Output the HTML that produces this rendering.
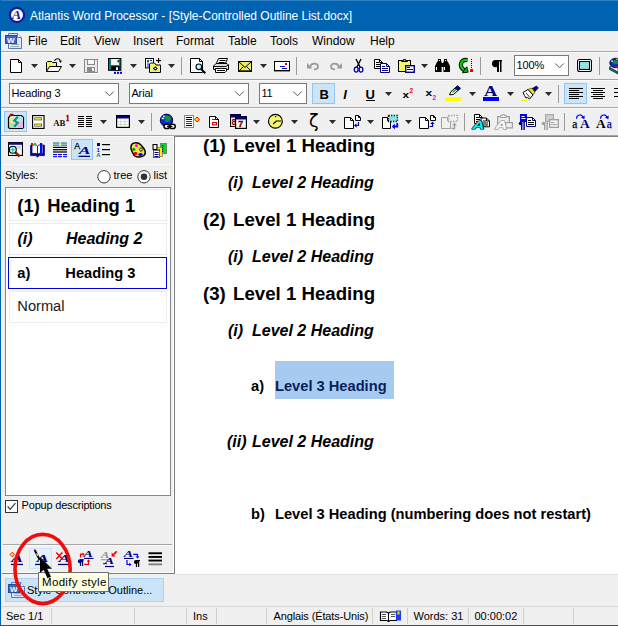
<!DOCTYPE html><html><head><meta charset="utf-8"><title>Atlantis Word Processor</title><style>
html,body{margin:0;padding:0;}
body{width:618px;height:626px;overflow:hidden;background:#f0f0f0;position:relative;font-family:"Liberation Sans",sans-serif;font-size:11px;color:#000;}
.a{position:absolute;}
.t{position:absolute;white-space:nowrap;line-height:1;}
.combo{position:absolute;background:#fff;border:1px solid #7a7a7a;box-sizing:border-box;}
.sel{position:absolute;background:#cce4f7;border:1px solid #92c6f0;box-sizing:border-box;}
svg{position:absolute;overflow:visible;}
</style></head><body>
<div class="a" style="left:0px;top:0px;width:618px;height:31px;background:#0063b1;"></div>
<div class="a" style="left:0px;top:0px;width:618px;height:1px;background:#2f7fc0;"></div>
<div class="t" style="left:30px;top:10.03px;font-size:12px;color:#fff;letter-spacing:-0.02px;">Atlantis Word Processor - [Style-Controlled Outline List.docx]</div>
<svg style="left:8px;top:6px" width="18" height="18" viewBox="0 0 18 18"><circle cx="9" cy="9" r="7.1" fill="#fff" stroke="#1818a4" stroke-width="2.2"/><text x="4.4" y="13.3" font-family="Liberation Serif,serif" font-size="13" font-weight="bold" font-style="italic" fill="#1c1ca8" transform="translate(-1.2,0) scale(1.1,1)">A</text></svg>
<div class="t" style="left:28px;top:35.03px;font-size:12px;">File</div>
<div class="t" style="left:60px;top:35.03px;font-size:12px;">Edit</div>
<div class="t" style="left:94px;top:35.03px;font-size:12px;">View</div>
<div class="t" style="left:133px;top:35.03px;font-size:12px;">Insert</div>
<div class="t" style="left:176px;top:35.03px;font-size:12px;">Format</div>
<div class="t" style="left:228px;top:35.03px;font-size:12px;">Table</div>
<div class="t" style="left:270px;top:35.03px;font-size:12px;">Tools</div>
<div class="t" style="left:312px;top:35.03px;font-size:12px;">Window</div>
<div class="t" style="left:370px;top:35.03px;font-size:12px;">Help</div>
<svg style="left:4px;top:32px" width="20" height="18" viewBox="0 0 20 18"><path d="M4.5 1.5 H13.5 L17.5 5.5 V16.5 H4.5 Z" fill="#dbe6f8" stroke="#5878b8"/><path d="M13.5 1.5 V5.5 H17.5" fill="#fff" stroke="#5878b8"/><rect x="7" y="12" width="8" height="1" fill="#9ab"/><rect x="7" y="14" width="8" height="1" fill="#9ab"/><rect x="1.5" y="3.5" width="11" height="8" fill="#3668c8" stroke="#2a4a9c"/><text x="3" y="10.5" font-size="8" font-weight="bold" fill="#fff" font-family="Liberation Sans,sans-serif">W</text></svg>
<div class="a" style="left:1px;top:51px;width:617px;height:1px;background:#a6a6a6;"></div>
<div class="a" style="left:1px;top:52px;width:617px;height:1px;background:#fbfbfb;"></div>
<div class="a" style="left:1px;top:79px;width:617px;height:1px;background:#a6a6a6;"></div>
<div class="a" style="left:1px;top:80px;width:617px;height:1px;background:#fbfbfb;"></div>
<div class="a" style="left:1px;top:107px;width:617px;height:1px;background:#a6a6a6;"></div>
<div class="a" style="left:1px;top:108px;width:617px;height:1px;background:#fbfbfb;"></div>
<div class="a" style="left:1px;top:135px;width:617px;height:1px;background:#a6a6a6;"></div>
<div class="a" style="left:1px;top:136px;width:617px;height:1px;background:#fbfbfb;"></div>
<div class="sel" style="left:312px;top:83px;width:23px;height:21px;"></div>
<div class="sel" style="left:564px;top:83px;width:23px;height:21px;"></div>
<div class="sel" style="left:4px;top:111px;width:23px;height:21px;"></div>
<div class="sel" style="left:71px;top:139px;width:22px;height:21px;"></div>
<div class="sel" style="left:29px;top:548px;width:23px;height:21px;background:#e5f1fb;border-color:#cce4f7;"></div>
<div class="combo" style="left:9px;top:83px;width:110px;height:21px;"></div>
<div class="t" style="left:11.4px;top:88.16px;font-size:11px;letter-spacing:-0.12px;">Heading 3</div>
<svg style="left:105.0px;top:91.3px" width="9" height="6" viewBox="0 0 9 6"><path d="M0.3 0.5 L4.5 4.8 L8.7 0.5" fill="none" stroke="#585858" stroke-width="1"/></svg>
<div class="combo" style="left:129px;top:83px;width:120px;height:21px;"></div>
<div class="t" style="left:131.4px;top:88.16px;font-size:11px;letter-spacing:-0.12px;">Arial</div>
<svg style="left:235.0px;top:91.3px" width="9" height="6" viewBox="0 0 9 6"><path d="M0.3 0.5 L4.5 4.8 L8.7 0.5" fill="none" stroke="#585858" stroke-width="1"/></svg>
<div class="combo" style="left:259px;top:83px;width:48px;height:21px;"></div>
<div class="t" style="left:261.4px;top:88.16px;font-size:11px;letter-spacing:-0.12px;">11</div>
<svg style="left:293.0px;top:91.3px" width="9" height="6" viewBox="0 0 9 6"><path d="M0.3 0.5 L4.5 4.8 L8.7 0.5" fill="none" stroke="#585858" stroke-width="1"/></svg>
<div class="combo" style="left:514px;top:55px;width:55px;height:21px;"></div>
<div class="t" style="left:516.4px;top:60.16px;font-size:11px;letter-spacing:-0.12px;">100%</div>
<svg style="left:555.0px;top:63.3px" width="9" height="6" viewBox="0 0 9 6"><path d="M0.3 0.5 L4.5 4.8 L8.7 0.5" fill="none" stroke="#585858" stroke-width="1"/></svg>
<div class="t" style="left:319.6px;top:87.7px;font-size:13px;font-weight:bold;">B</div>
<div class="t" style="left:343.2px;top:87.7px;font-size:13px;font-weight:bold;font-style:italic;">I</div>
<div class="t" style="left:365.4px;top:87.7px;font-size:13px;font-weight:bold;">U</div>
<div class="a" style="left:366px;top:100px;width:9px;height:1px;background:#000;"></div>
<div class="a" style="left:175px;top:137px;width:443px;height:436.6px;background:#fff;"></div>
<div class="a" style="left:174px;top:135.6px;width:444px;height:1.5px;background:#808080;"></div>
<div class="a" style="left:173.5px;top:136px;width:1.5px;height:438px;background:#808080;"></div>
<div class="a" style="left:172.5px;top:137px;width:1px;height:435px;background:#fcfcfc;"></div>
<div class="a" style="left:175px;top:573.6px;width:443px;height:1px;background:#e4e4e4;"></div>
<div class="a" style="left:2px;top:571.6px;width:171px;height:1px;background:#fcfcfc;"></div>
<div class="a" style="left:2px;top:572.7px;width:173px;height:1.3px;background:#808080;"></div>
<div class="t" style="left:203px;top:137.49px;font-size:18.67px;color:#000;font-weight:bold;">(1)</div>
<div class="t" style="left:233px;top:137.49px;font-size:18.67px;color:#000;font-weight:bold;">Level 1 Heading</div>
<div class="t" style="left:203px;top:211.49px;font-size:18.67px;color:#000;font-weight:bold;">(2)</div>
<div class="t" style="left:233px;top:211.49px;font-size:18.67px;color:#000;font-weight:bold;">Level 1 Heading</div>
<div class="t" style="left:203px;top:285.49px;font-size:18.67px;color:#000;font-weight:bold;">(3)</div>
<div class="t" style="left:233px;top:285.49px;font-size:18.67px;color:#000;font-weight:bold;">Level 1 Heading</div>
<div class="t" style="left:228px;top:174.71px;font-size:16px;color:#000;font-weight:bold;font-style:italic;">(i)</div>
<div class="t" style="left:252px;top:174.71px;font-size:16px;color:#000;font-weight:bold;font-style:italic;">Level 2 Heading</div>
<div class="t" style="left:228px;top:248.71px;font-size:16px;color:#000;font-weight:bold;font-style:italic;">(i)</div>
<div class="t" style="left:252px;top:248.71px;font-size:16px;color:#000;font-weight:bold;font-style:italic;">Level 2 Heading</div>
<div class="t" style="left:228px;top:322.71px;font-size:16px;color:#000;font-weight:bold;font-style:italic;">(i)</div>
<div class="t" style="left:252px;top:322.71px;font-size:16px;color:#000;font-weight:bold;font-style:italic;">Level 2 Heading</div>
<div class="a" style="left:275px;top:361px;width:119px;height:38px;background:#a6caf0;"></div>
<div class="t" style="left:251px;top:378.82px;font-size:14.67px;color:#000;font-weight:bold;">a)</div>
<div class="t" style="left:275px;top:378.82px;font-size:14.67px;color:#0a1f5c;font-weight:bold;">Level 3 Heading</div>
<div class="t" style="left:227px;top:433.71px;font-size:16px;color:#000;font-weight:bold;font-style:italic;">(ii)</div>
<div class="t" style="left:252px;top:433.71px;font-size:16px;color:#000;font-weight:bold;font-style:italic;">Level 2 Heading</div>
<div class="t" style="left:251px;top:506.82px;font-size:14.67px;color:#000;font-weight:bold;">b)</div>
<div class="t" style="left:275px;top:506.82px;font-size:14.67px;font-weight:bold;">Level 3 Heading (numbering does not restart)</div>
<div class="a" style="left:2px;top:164px;width:170px;height:1px;background:#fcfcfc;"></div>
<div class="t" style="left:5px;top:169.86px;font-size:11px;">Styles:</div>
<div class="t" style="left:113.5px;top:169.86px;font-size:11px;">tree</div>
<div class="t" style="left:153.5px;top:169.86px;font-size:11px;">list</div>
<svg style="left:97px;top:170px" width="14" height="14"><circle cx="7" cy="6.8" r="6.2" fill="#fff" stroke="#333" stroke-width="1"/></svg>
<svg style="left:137px;top:170px" width="14" height="14"><circle cx="7" cy="6.8" r="6.2" fill="#fff" stroke="#333" stroke-width="1"/><circle cx="7" cy="6.8" r="3.3" fill="#333"/></svg>
<div class="a" style="left:5px;top:187px;width:166px;height:309px;background:#fff;border:1px solid #828790;box-sizing:border-box;"></div>
<div class="a" style="left:9px;top:189px;width:158px;height:32px;border:1px solid #ececec;box-sizing:border-box;"></div>
<div class="a" style="left:9px;top:223px;width:158px;height:32px;border:1px solid #ececec;box-sizing:border-box;"></div>
<div class="a" style="left:9px;top:291px;width:158px;height:32px;border:1px solid #ececec;box-sizing:border-box;"></div>
<div class="a" style="left:8px;top:257px;width:159px;height:32px;border:1px solid #0000e0;box-sizing:border-box;"></div>
<div class="t" style="left:17.3px;top:196.92px;font-size:18.4px;color:#000;font-weight:bold;">(1)</div>
<div class="t" style="left:47.3px;top:196.92px;font-size:18.4px;color:#000;font-weight:bold;">Heading 1</div>
<div class="t" style="left:17.5px;top:230.71px;font-size:16px;color:#000;font-weight:bold;font-style:italic;">(i)</div>
<div class="t" style="left:66px;top:230.71px;font-size:16px;color:#000;font-weight:bold;font-style:italic;">Heading 2</div>
<div class="t" style="left:17.3px;top:266.12px;font-size:14.67px;color:#000;font-weight:bold;">a)</div>
<div class="t" style="left:65.3px;top:266.12px;font-size:14.67px;color:#000;font-weight:bold;">Heading 3</div>
<div class="t" style="left:17.3px;top:299.02px;font-size:14.67px;color:#1a1a1a;">Normal</div>
<div class="a" style="left:5px;top:500px;width:13px;height:13px;background:#fff;border:1px solid #333;box-sizing:border-box;"></div>
<svg style="left:5px;top:500px" width="13" height="13"><path d="M2.6 6.4 L5.2 9.3 L10.4 3.2" fill="none" stroke="#333" stroke-width="1.2"/></svg>
<div class="t" style="left:21.6px;top:500.06px;font-size:11px;letter-spacing:-0.2px;">Popup descriptions</div>
<div class="a" style="left:3px;top:544px;width:169px;height:1px;background:#a6a6a6;"></div>
<div class="a" style="left:3px;top:545px;width:169px;height:1px;background:#fbfbfb;"></div>
<div class="a" style="left:5px;top:578px;width:159px;height:24px;background:#cce4f7;border:1px solid #a9d4f5;box-sizing:border-box;"></div>
<svg style="left:7px;top:581px" width="20" height="18" viewBox="0 0 20 18"><path d="M4.5 1.5 H13.5 L17.5 5.5 V16.5 H4.5 Z" fill="#dbe6f8" stroke="#5878b8"/><path d="M13.5 1.5 V5.5 H17.5" fill="#fff" stroke="#5878b8"/><rect x="7" y="12" width="8" height="1" fill="#9ab"/><rect x="7" y="14" width="8" height="1" fill="#9ab"/><rect x="1.5" y="3.5" width="11" height="8" fill="#3668c8" stroke="#2a4a9c"/><text x="3" y="10.5" font-size="8" font-weight="bold" fill="#fff" font-family="Liberation Sans,sans-serif">W</text></svg>
<div class="t" style="left:27px;top:584.86px;font-size:11px;">Style-Controlled Outline...</div>
<div class="a" style="left:1px;top:605.5px;width:617px;height:1px;background:#d4d4d4;"></div>
<div class="a" style="left:0px;top:624.7px;width:618px;height:1.3px;background:#0063b1;"></div>
<div class="a" style="left:50.5px;top:608px;width:1px;height:16px;background:#cfcfcf;"></div>
<div class="a" style="left:134px;top:608px;width:1px;height:16px;background:#cfcfcf;"></div>
<div class="a" style="left:186px;top:608px;width:1px;height:16px;background:#cfcfcf;"></div>
<div class="a" style="left:216px;top:608px;width:1px;height:16px;background:#cfcfcf;"></div>
<div class="a" style="left:266px;top:608px;width:1px;height:16px;background:#cfcfcf;"></div>
<div class="a" style="left:372px;top:608px;width:1px;height:16px;background:#cfcfcf;"></div>
<div class="a" style="left:407px;top:608px;width:1px;height:16px;background:#cfcfcf;"></div>
<div class="a" style="left:467.5px;top:608px;width:1px;height:16px;background:#cfcfcf;"></div>
<div class="a" style="left:522.5px;top:608px;width:1px;height:16px;background:#cfcfcf;"></div>
<div class="a" style="left:572.5px;top:608px;width:1px;height:16px;background:#cfcfcf;"></div>
<div class="t" style="left:6px;top:610.86px;font-size:11px;">Sec 1/1</div>
<div class="t" style="left:193px;top:610.86px;font-size:11px;">Ins</div>
<div class="t" style="left:273.5px;top:610.86px;font-size:11px;letter-spacing:-0.12px;">Anglais (États-Unis)</div>
<div class="t" style="left:413.5px;top:610.86px;font-size:11px;">Words: 31</div>
<div class="t" style="left:474.5px;top:610.86px;font-size:11px;">00:00:02</div>
<svg style="left:379px;top:609px" width="24" height="14" viewBox="0 0 24 14"><path d="M1.5 3 V11.5 H8 L9.5 12.5 L11 11.5 H17.5 V3 H11.5 L9.5 4 L7.5 3 Z" fill="#fff" stroke="#000" stroke-width="1.2"/><line x1="9.5" y1="4" x2="9.5" y2="12" stroke="#000"/><rect x="3" y="5" width="4" height="1" fill="#555"/><rect x="3" y="7" width="4" height="1" fill="#555"/><rect x="3" y="9" width="4" height="1" fill="#555"/><rect x="12" y="5" width="4" height="1" fill="#555"/><rect x="12" y="7" width="4" height="1" fill="#555"/><rect x="17" y="1.5" width="5" height="10" fill="#1a3cff"/><rect x="18.5" y="2.5" width="2" height="3" fill="#ffe000"/></svg>
<div class="a" style="left:0px;top:0px;width:1.1px;height:626px;background:#0063b1;"></div>
<svg class="ic" style="left:0;top:0" width="618" height="626" viewBox="0 0 618 626" font-family="Liberation Sans,sans-serif"><path d="M10.5 59.5 H18.5 L21.5 62.5 V72.5 H10.5 Z" fill="#fff" stroke="#000" stroke-width="1" />
<path d="M18.5 59.5 V62.5 H21.5" fill="none" stroke="#000" stroke-width="1" />
<path d="M31 64 H38 L34.5 68 Z" fill="#2b2b2b" stroke="none" stroke-width="1" />
<path d="M46.5 71.5 V62.5 L47.5 61.5 H51.5 L52.5 62.5 H56.5 V66" fill="#f4f46a" stroke="#000" stroke-width="1" />
<path d="M46.5 71.5 L49.5 66.5 H61.5 L58.5 71.5 Z" fill="#fffff4" stroke="#000" stroke-width="1" />
<path d="M54.5 60.8 C55.3 58.2 59.3 58 60.3 60.4" fill="none" stroke="#000" stroke-width="1.1" />
<path d="M58.6 60.4 L61.9 60.4 L60.6 63 Z" fill="#000" stroke="none" stroke-width="1" />
<path d="M69 64 H76 L72.5 68 Z" fill="#2b2b2b" stroke="none" stroke-width="1" />
<rect x="85.5" y="60.5" width="13" height="13" fill="none" stroke="#fff" stroke-width="1" />
<rect x="84.5" y="59.5" width="13" height="13" fill="#ececec" stroke="#8a8a8a" stroke-width="1" />
<rect x="87.5" y="59.5" width="7" height="5" fill="#f6f6f6" stroke="#8a8a8a" stroke-width="1" />
<rect x="87" y="67" width="8" height="5" fill="#8a8a8a" />
<rect x="92" y="68" width="2" height="3" fill="#f0f0f0" />
<rect x="108.5" y="58.5" width="12.4" height="11.8" fill="#008080" stroke="#000" stroke-width="1" />
<rect x="111" y="59" width="8" height="6" fill="#f4f4f4" />
<rect x="117.6" y="60" width="1.2" height="2.4" fill="#000" />
<rect x="111" y="66.2" width="8.6" height="4" fill="#000" />
<rect x="116" y="67.3" width="2" height="2.7" fill="#fff" />
<rect x="114" y="71.8" width="2" height="2.1" fill="#0000ff" />
<rect x="117" y="71.8" width="2" height="2.1" fill="#0000ff" />
<rect x="120" y="71.8" width="2" height="2.1" fill="#0000ff" />
<path d="M130 64 H137 L133.5 68 Z" fill="#2b2b2b" stroke="none" stroke-width="1" />
<rect x="145.5" y="58.5" width="8" height="9.4" fill="#fff" stroke="#000" stroke-width="1" />
<rect x="147" y="60" width="2" height="2.4" fill="#008000" />
<rect x="150" y="60" width="2" height="1" fill="#0000ff" />
<rect x="147" y="63.6" width="2" height="1" fill="#0000ff" />
<rect x="147" y="65.6" width="2" height="1" fill="#0000ff" />
<path d="M149.5 72.5 V64 L150.5 63 H154.5 L156 65 H160.5 V72.5 Z" fill="#f4f46a" stroke="#000" stroke-width="1" />
<path d="M153 68.5 H157.6 M155.3 66.2 V70.8 M153.7 66.9 L156.9 70.1 M156.9 66.9 L153.7 70.1" fill="none" stroke="#000080" stroke-width="0.9" />
<rect x="154.8" y="68" width="1" height="1" fill="#fff" />
<rect x="156" y="60" width="5" height="1.1" fill="#000" />
<rect x="158" y="58" width="1.1" height="5" fill="#000" />
<path d="M168 64 H175 L171.5 68 Z" fill="#2b2b2b" stroke="none" stroke-width="1" />
<rect x="181" y="57" width="1" height="18" fill="#9a9a9a" />
<path d="M190.5 58.5 H199.5 L202.5 61.5 V72.5 H190.5 Z" fill="#fff" stroke="#000" stroke-width="1" />
<path d="M199.5 58.5 V61.5 H202.5" fill="none" stroke="#000" stroke-width="1" />
<circle cx="198.8" cy="66.8" r="2.8" fill="#aff" stroke="#000" stroke-width="1.1"/>
<line x1="201" y1="69" x2="205.3" y2="73.3" stroke="#000" stroke-width="2" />
<path d="M218.5 58.5 H227.5 L225 64.5 H216 Z" fill="#fff" stroke="#000" stroke-width="1" />
<line x1="219.5" y1="60.5" x2="225.5" y2="60.5" stroke="#000" stroke-width="1" />
<line x1="218.7" y1="62.5" x2="224.7" y2="62.5" stroke="#000" stroke-width="1" />
<path d="M213.5 69.5 V66 L216 63.5 H227 L228.5 65 V69.5 Z" fill="#dcdcdc" stroke="#000" stroke-width="1" />
<path d="M213.5 66.5 H226 L228.5 64.8" fill="none" stroke="#000" stroke-width="0.9" />
<path d="M215.5 68.5 H226.5 V71 L225 72.5 H215.5 Z" fill="#fff" stroke="#000" stroke-width="1" />
<rect x="217" y="70" width="8" height="1" fill="#000" />
<rect x="219.5" y="67" width="3" height="1.2" fill="#f0e000" />
<rect x="238.5" y="61.5" width="13" height="9.6" fill="#ecec58" stroke="#000" stroke-width="1" />
<rect x="238" y="70.6" width="14" height="1.2" fill="#000" />
<path d="M238.5 61.5 L245 67.5 L251.5 61.5 M238.5 71.5 L243.5 66.5 M251.5 71.5 L246.5 66.5" fill="none" stroke="#000" stroke-width="1" />
<path d="M260 64 H267 L263.5 68 Z" fill="#2b2b2b" stroke="none" stroke-width="1" />
<rect x="274.5" y="61.5" width="15" height="9" fill="#fff" stroke="#000" stroke-width="1" />
<rect x="274" y="70" width="16" height="1.4" fill="#000" />
<rect x="280" y="66" width="5" height="1" fill="#0000ff" />
<rect x="282" y="68" width="5" height="1" fill="#000080" />
<rect x="285" y="63" width="2" height="2" fill="#c00020" />
<rect x="296" y="57" width="1" height="18" fill="#9a9a9a" />
<path d="M310 67 C311 62.5 318 62.5 318 66.5 C318 68.5 316.5 69.3 314 69.3" fill="none" stroke="#9a9a9a" stroke-width="1.8" />
<path d="M307 63 V68.5 H312.5 Z" fill="#9a9a9a" stroke="none" stroke-width="1" />
<path d="M339 67 C338 62.5 331 62.5 331 66.5 C331 68.5 332.5 69.3 335 69.3" fill="none" stroke="#9a9a9a" stroke-width="1.8" />
<path d="M342 63 V68.5 H336.5 Z" fill="#9a9a9a" stroke="none" stroke-width="1" />
<path d="M356 59 L360.3 67.5 M361 59 L356.7 67.5" fill="none" stroke="#000" stroke-width="1.35" />
<ellipse cx="356.2" cy="69.6" rx="1.9" ry="2.5" fill="none" stroke="#0000a0" stroke-width="1.3" />
<ellipse cx="361" cy="69.6" rx="1.9" ry="2.5" fill="none" stroke="#0000a0" stroke-width="1.3" />
<path d="M374.5 59.5 H379.5 L382.5 62.5 V68.5 H374.5 Z" fill="#fff" stroke="#000" stroke-width="1" />
<path d="M379.5 59.5 V62.5 H382.5" fill="none" stroke="#000" stroke-width="1" />
<rect x="376" y="62" width="3" height="1" fill="#000" />
<rect x="376" y="64" width="4" height="1" fill="#000" />
<rect x="376" y="66" width="4" height="1" fill="#000" />
<path d="M380.5 63.5 H386.5 L389.5 66.5 V72.5 H380.5 Z" fill="#fff" stroke="#000080" stroke-width="1" />
<path d="M386.5 63.5 V66.5 H389.5" fill="none" stroke="#000080" stroke-width="1" />
<rect x="382" y="66" width="3" height="1" fill="#000080" />
<rect x="382" y="68" width="6" height="1" fill="#000080" />
<rect x="382" y="70" width="6" height="1" fill="#000080" />
<rect x="398.5" y="60.5" width="12" height="11" fill="#f4f46a" stroke="#000" stroke-width="1" />
<path d="M401.5 61.5 V60.5 H403.5 V59.5 H405.5 V60.5 H407.5 V61.5 Z" fill="#e0e0e0" stroke="#000" stroke-width="1" />
<rect x="405.7" y="65.7" width="8.6" height="6.6" fill="#fff" stroke="#000080" stroke-width="1.4" />
<rect x="407" y="67" width="3" height="1" fill="#000080" />
<rect x="407" y="69" width="6" height="1" fill="#000080" />
<path d="M421 64 H428 L424.5 68 Z" fill="#2b2b2b" stroke="none" stroke-width="1" />
<path d="M438 59 H441 V61 L441.6 62 V72 H435 V66 L437 62 L438 61 Z" fill="#000" stroke="none" stroke-width="1" />
<path d="M447 59 H444 V61 L443.4 62 V72 H450 V66 L448 62 L447 61 Z" fill="#000" stroke="none" stroke-width="1" />
<rect x="441" y="63" width="3" height="4" fill="#000" />
<rect x="436" y="67" width="1" height="3" fill="#fff" />
<rect x="444" y="67" width="1" height="3" fill="#fff" />
<rect x="439" y="60" width="1" height="1" fill="#fff" />
<rect x="445" y="60" width="1" height="1" fill="#fff" />
<path d="M467.5 60 C461 59 458 66 464.5 70.5" fill="none" stroke="#000" stroke-width="4.2" />
<path d="M467.5 60 C461 59 458 66 464.5 70.5" fill="none" stroke="#00d000" stroke-width="2.4" />
<path d="M462.5 72.8 L468.2 72.2 L466.8 66.8 Z" fill="#00c000" stroke="#000" stroke-width="0.9" />
<rect x="471" y="59" width="1" height="1" fill="#000" />
<rect x="471" y="61" width="1" height="1" fill="#000" />
<rect x="471" y="63" width="1" height="1" fill="#000" />
<rect x="471" y="65" width="1" height="1" fill="#000" />
<rect x="471" y="67" width="1" height="1" fill="#000" />
<rect x="470" y="69" width="3" height="3" fill="#f00000" />
<rect x="480" y="57" width="1" height="18" fill="#9a9a9a" />
<ellipse cx="495.6" cy="63.6" rx="3.6" ry="3.6" fill="#000" stroke="none" stroke-width="1" />
<rect x="495" y="60" width="7" height="1.5" fill="#000" />
<rect x="497" y="60" width="2" height="12" fill="#000" />
<rect x="500" y="60" width="1.5" height="12" fill="#000" />
<rect x="577.55" y="59.55" width="13.9" height="11.9" fill="#fff" stroke="#000" stroke-width="1.1" rx="2"/>
<rect x="579.55" y="61.55" width="9.9" height="7.9" fill="#a4ffff" stroke="#000" stroke-width="1.1" />
<rect x="581" y="63.5" width="7" height="0.8" fill="#9aa" />
<rect x="581" y="65.5" width="7" height="0.8" fill="#9aa" />
<rect x="581" y="67.5" width="7" height="0.8" fill="#9aa" />
<rect x="599" y="57" width="1" height="18" fill="#9a9a9a" />
<path d="M609.5 67.5 L618 72.5 V74 L609.5 69.5 Z" fill="#008080" stroke="#003838" stroke-width="0.8" />
<path d="M609.5 67 L614 64.5 L618 66.5 V72 Z" fill="#fff" stroke="#003838" stroke-width="0.8" />
<ellipse cx="616" cy="63" rx="6.2" ry="4.8" fill="#0828d8" stroke="#000820" stroke-width="0.9" />
<path d="M612 62 C613.5 59.5 617 60 618 61 V63.5 C615.5 64.8 613.5 64.5 612 62Z" fill="#109030" stroke="none" stroke-width="1" />
<rect x="611" y="60.5" width="2" height="1.2" fill="#d8f0ff" />
<rect x="616" y="58.6" width="2" height="1.2" fill="#b0b0b0" />
<rect x="615.5" y="66" width="2.5" height="1.6" fill="#f00018" />
<path d="M385 92 H392 L388.5 96 Z" fill="#2b2b2b" stroke="none" stroke-width="1" />
<text x="0" y="0" font-size="9.5" fill="#000" font-weight="bold" transform="translate(402.6,98.4) scale(1.25,1)">x</text>
<text x="409.6" y="93.4" font-size="6.5" fill="#f00000" font-weight="bold">2</text>
<text x="0" y="0" font-size="9.5" fill="#000" font-weight="bold" transform="translate(425.6,96) scale(1.25,1)">x</text>
<text x="432.4" y="100" font-size="6.5" fill="#f000f0" font-weight="bold">2</text>
<rect x="445" y="97" width="16" height="4" fill="#ffff00" />
<path d="M449.5 94.8 L451 91.5 L457.5 86 L460.3 88.3 L453.5 94.5 Z" fill="#fff" stroke="#000" stroke-width="1" />
<path d="M455 88.2 L457.5 86 L460.3 88.3 L457.8 90.6 Z" fill="#0000c0" stroke="#000" stroke-width="0.8" />
<line x1="452.5" y1="92.5" x2="456.5" y2="89" stroke="#00a000" stroke-width="1.2" />
<path d="M469 92 H476 L472.5 96 Z" fill="#2b2b2b" stroke="none" stroke-width="1" />
<text x="0" y="0" font-size="14.5" fill="#000080" font-weight="bold" font-family="Liberation Serif,serif" transform="translate(484,96.2) scale(1.27,1)">A</text>
<rect x="483" y="97" width="16" height="4" fill="#0000ff" />
<path d="M507 92 H514 L510.5 96 Z" fill="#2b2b2b" stroke="none" stroke-width="1" />
<path d="M531.5 89 L536.5 86 L538.3 88 L534 92.5 Z" fill="#000080" stroke="#000060" stroke-width="0.8" />
<path d="M528 89.5 L531.5 88 L535 92 L533 95 Z" fill="#f0e020" stroke="#404000" stroke-width="0.7" />
<path d="M523 92.5 L528 89.5 L533 95 L529.5 99 L527.5 97.5 L526 98 L524.5 95.5 Z" fill="#fff" stroke="#000" stroke-width="1" />
<line x1="526" y1="93" x2="530" y2="97.5" stroke="#000" stroke-width="0.8" />
<rect x="522" y="100" width="1.2" height="1" fill="#f0e800" />
<rect x="524" y="100" width="1.2" height="1" fill="#f0e800" />
<rect x="526" y="100" width="1.2" height="1" fill="#f0e800" />
<path d="M545 92 H552 L548.5 96 Z" fill="#2b2b2b" stroke="none" stroke-width="1" />
<rect x="558" y="85" width="1" height="18" fill="#9a9a9a" />
<rect x="569" y="88" width="14" height="1" fill="#000" />
<rect x="569" y="90" width="10" height="1" fill="#000" />
<rect x="569" y="92" width="14" height="1" fill="#000" />
<rect x="569" y="94" width="10" height="1" fill="#000" />
<rect x="569" y="96" width="14" height="1" fill="#000" />
<rect x="569" y="98" width="10" height="1" fill="#000" />
<rect x="591" y="88" width="14" height="1" fill="#000" />
<rect x="593" y="90" width="10" height="1" fill="#000" />
<rect x="591" y="92" width="14" height="1" fill="#000" />
<rect x="593" y="94" width="10" height="1" fill="#000" />
<rect x="591" y="96" width="14" height="1" fill="#000" />
<rect x="593" y="98" width="10" height="1" fill="#000" />
<rect x="614" y="88" width="6" height="1" fill="#000" />
<rect x="614" y="92" width="6" height="1" fill="#000" />
<rect x="614" y="96" width="6" height="1" fill="#000" />
<path d="M8.5 127.5 V117.5 L10.5 115.5 H21.5 L23.5 117.5 V127.5 L22.5 128.5 H9.5 Z" fill="#cfe8d6" stroke="#000" stroke-width="1.2" />
<rect x="10" y="117" width="4" height="6" fill="#e4ecA0" />
<rect x="10" y="123" width="4" height="5" fill="#a8e4a8" />
<rect x="14" y="117" width="4" height="4" fill="#e8f0b8" />
<rect x="18" y="117" width="5" height="5" fill="#a8e8e8" />
<rect x="18" y="122" width="5" height="6" fill="#ecb4ec" />
<rect x="14" y="124" width="4" height="4" fill="#b8ecc8" />
<path d="M9.5 115.5 L10.5 114 H13 L14 115.5 Z" fill="#e00000" stroke="#a00000" stroke-width="0.6" />
<path d="M17.8 116.8 L14.3 120.6 L17.7 122.8 L14.3 126.8" fill="none" stroke="#109090" stroke-width="2.3" />
<rect x="32.575" y="115.575" width="11.45" height="12.85" fill="#fff" stroke="#000" stroke-width="1.15" />
<rect x="34.699999999999996" y="117.8" width="7.0" height="2.1999999999999997" fill="#f8f020" stroke="#333" stroke-width="0.6" />
<rect x="34.699999999999996" y="124.0" width="7.0" height="2.1999999999999997" fill="#f8f020" stroke="#333" stroke-width="0.6" />
<text x="53.2" y="125.7" font-size="8.8" fill="#111" font-weight="bold" font-family="Liberation Serif,serif">AB</text>
<text x="65.8" y="121.4" font-size="7.5" fill="#900000" font-weight="bold" font-family="Liberation Serif,serif" stroke="#900000" stroke-width=".35">1</text>
<rect x="78" y="116" width="6" height="1" fill="#000" />
<rect x="78" y="118" width="6" height="1" fill="#000" />
<rect x="78" y="120" width="6" height="1" fill="#000" />
<rect x="78" y="122" width="6" height="1" fill="#000" />
<rect x="78" y="124" width="6" height="1" fill="#000" />
<rect x="78" y="126" width="6" height="1" fill="#000" />
<rect x="86" y="116" width="6" height="1" fill="#000" />
<rect x="86" y="118" width="6" height="1" fill="#000" />
<rect x="86" y="120" width="6" height="1" fill="#000" />
<rect x="86" y="122" width="6" height="1" fill="#000" />
<rect x="86" y="124" width="6" height="1" fill="#000" />
<rect x="86" y="126" width="6" height="1" fill="#000" />
<path d="M100 120 H107 L103.5 124 Z" fill="#2b2b2b" stroke="none" stroke-width="1" />
<rect x="116.6" y="115.6" width="12.8" height="11.8" fill="#fff" stroke="#000" stroke-width="1.2" />
<rect x="117" y="116" width="12" height="2.5" fill="#000080" />
<rect x="120.5" y="119" width="0.7" height="8" fill="#c8c8c8" />
<rect x="124.5" y="119" width="0.7" height="8" fill="#c8c8c8" />
<rect x="117" y="121.5" width="12" height="0.7" fill="#c8c8c8" />
<rect x="117" y="124.3" width="12" height="0.7" fill="#c8c8c8" />
<path d="M138 120 H145 L141.5 124 Z" fill="#2b2b2b" stroke="none" stroke-width="1" />
<rect x="151" y="113" width="1" height="18" fill="#9a9a9a" />
<circle cx="166.5" cy="120.3" r="6.2" fill="#0828e0" stroke="#000830" stroke-width="1"/>
<path d="M164 116.5 C166 114.6 170 115.5 171 118.5 C170.5 121.5 167 123 164.6 121 C166 119.5 165.5 118 164 116.5 Z" fill="#0c9830" stroke="none" stroke-width="1" />
<rect x="161.6" y="117.6" width="2.6" height="1.6" fill="#b8f0ff" />
<rect x="163" y="115.6" width="1.6" height="1.4" fill="#fff" />
<rect x="164.05" y="124.35" width="5.5" height="4.1" fill="#fff" stroke="#000" stroke-width="1.5" rx="2.2"/>
<rect x="169.75" y="124.35" width="5.5" height="4.1" fill="#fff" stroke="#000" stroke-width="1.5" rx="2.2"/>
<rect x="167" y="125.8" width="5.4" height="1.3" fill="#000" />
<rect x="184.5" y="115.5" width="9" height="12" fill="#fff" stroke="#8a8a8a" stroke-width="1" />
<rect x="186" y="117" width="6" height="1" fill="#000" />
<rect x="186" y="119" width="6" height="1" fill="#000" />
<rect x="186" y="121" width="6" height="1" fill="#e00000" />
<rect x="186" y="123" width="6" height="1" fill="#e00000" />
<rect x="186" y="125" width="6" height="1" fill="#000" />
<path d="M197 117 L199.5 119.5 L197 122 L194.5 119.5 Z" fill="#ffe000" stroke="#f00000" stroke-width="0.9" />
<path d="M209.5 116.5 H215.5 L218.5 119.5 V127.5 H209.5 Z" fill="#fff" stroke="#000" stroke-width="1" />
<path d="M215.5 116.5 V119.5 H218.5" fill="none" stroke="#000" stroke-width="1" />
<rect x="212" y="119" width="3" height="1" fill="#e00000" />
<rect x="212.55" y="122.55" width="3.9" height="2.3" fill="#fff" stroke="#e00000" stroke-width="1.1" />
<rect x="230.5" y="114.5" width="10" height="12" fill="#e8e8e8" stroke="#000" stroke-width="1" />
<rect x="230.5" y="114.5" width="10" height="3" fill="#000080" />
<text x="231.6" y="125" font-size="8.5" fill="#800000" font-weight="bold">8</text>
<rect x="235.6" y="116.6" width="10.8" height="11.8" fill="#fff" stroke="#000" stroke-width="1.2" />
<rect x="235.5" y="116.5" width="11" height="3" fill="#000080" />
<text x="238" y="127.4" font-size="9.5" fill="#800000" font-weight="bold" stroke="#800000" stroke-width=".3">7</text>
<path d="M253 120 H260 L256.5 124 Z" fill="#2b2b2b" stroke="none" stroke-width="1" />
<circle cx="275.4" cy="121.3" r="6.9" fill="#f6f670" stroke="#000" stroke-width="1.2"/>
<path d="M273.2 124 L276.3 121 H281" fill="none" stroke="#000" stroke-width="1.2" />
<rect x="275" y="116" width="1.2" height="1.2" fill="#000" />
<path d="M291 120 H298 L294.5 124 Z" fill="#2b2b2b" stroke="none" stroke-width="1" />
<text x="309" y="126.5" font-size="17.5" fill="#000" font-family="DejaVu Sans,sans-serif">ζ</text>
<path d="M329 120 H336 L332.5 124 Z" fill="#2b2b2b" stroke="none" stroke-width="1" />
<path d="M344.5 117.5 H350.5 L353.5 120.5 V128.5 H344.5 Z" fill="#fff" stroke="#000" stroke-width="1" />
<path d="M350.5 117.5 V120.5 H353.5" fill="none" stroke="#000" stroke-width="1" />
<path d="M355.5 115.5 H358.5 L360.5 117.5 V120.5 H355.5 Z" fill="#fff" stroke="#000" stroke-width="1" />
<path d="M358.5 115.5 V117.5 H360.5" fill="none" stroke="#000" stroke-width="1" />
<path d="M358.5 122 V125.5 H355" fill="none" stroke="#0000c0" stroke-width="1.2" />
<path d="M356.5 123.3 L354 125.5 L356.5 127.7 Z" fill="#0000c0" stroke="none" stroke-width="1" />
<path d="M367 120 H374 L370.5 124 Z" fill="#2b2b2b" stroke="none" stroke-width="1" />
<path d="M382.5 117.5 H387.5 L390.5 120.5 V128.5 H382.5 Z" fill="#fff" stroke="#000" stroke-width="1" />
<path d="M387.5 117.5 V120.5 H390.5" fill="none" stroke="#000" stroke-width="1" />
<rect x="389" y="116" width="8" height="5" fill="#7fe8f0" />
<rect x="388.5" y="115.5" width="9" height="6" fill="none" stroke="#000" stroke-width="1.3" stroke-dasharray="1.3 1.3"/>
<path d="M397.3 123 V126.5 H393.5" fill="none" stroke="#0000ff" stroke-width="1.8" />
<path d="M394.8 123.6 L391.8 126.5 L394.8 129.4 Z" fill="#0000ff" stroke="none" stroke-width="1" />
<path d="M405 120 H412 L408.5 124 Z" fill="#2b2b2b" stroke="none" stroke-width="1" />
<path d="M419.5 117.5 H425.5 L428.5 120.5 V128.5 H419.5 Z" fill="#fff" stroke="#000" stroke-width="1" />
<path d="M425.5 117.5 V120.5 H428.5" fill="none" stroke="#000" stroke-width="1" />
<path d="M430.5 115.5 H433.5 L435.5 117.5 V120.5 H430.5 Z" fill="#fff" stroke="#000" stroke-width="1" />
<path d="M433.5 115.5 V117.5 H435.5" fill="none" stroke="#000" stroke-width="1" />
<path d="M429.5 126.5 H432.5 V123" fill="none" stroke="#0000c0" stroke-width="1.2" />
<path d="M430.3 124 L432.5 121.4 L434.7 124 Z" fill="#0000c0" stroke="none" stroke-width="1" />
<path d="M441.5 117.5 H447.5 L450.5 120.5 V128.5 H441.5 Z" fill="#f0f0f0" stroke="#a0a0a0" stroke-width="1" />
<path d="M447.5 117.5 V120.5 H450.5" fill="none" stroke="#a0a0a0" stroke-width="1" />
<rect x="448.5" y="115.5" width="9" height="6" fill="#f0f0f0" stroke="#a0a0a0" stroke-width="1.3" stroke-dasharray="1.3 1.3"/>
<path d="M451.5 128.5 H454.5 V125" fill="none" stroke="#a0a0a0" stroke-width="1.4" />
<path d="M452 125.6 L454.5 122.8 L457 125.6 Z" fill="#a0a0a0" stroke="none" stroke-width="1" />
<rect x="464" y="113" width="1" height="18" fill="#9a9a9a" />
<path d="M474.5 114.5 H479.5 L482.5 117.5 V123.5 H474.5 Z" fill="#fff" stroke="#000" stroke-width="1" />
<path d="M479.5 114.5 V117.5 H482.5" fill="none" stroke="#000" stroke-width="1" />
<rect x="476" y="117" width="3" height="1" fill="#000" />
<rect x="476" y="119" width="4" height="1" fill="#000" />
<rect x="476" y="121" width="4" height="1" fill="#000" />
<path d="M481.0 118.0 H486.5 L489.5 121.0 V126.8 H481.0 Z" fill="#fff" stroke="#000" stroke-width="1" />
<path d="M486.5 118.0 V121.0 H489.5" fill="none" stroke="#000" stroke-width="1" />
<rect x="483" y="120.5" width="3" height="1" fill="#000" />
<rect x="483" y="122.5" width="5" height="1" fill="#000" />
<rect x="483" y="124.5" width="5" height="1" fill="#000" />
<text x="0" y="0" font-size="11" fill="#00f4fc" font-weight="bold" font-style="italic" stroke="#000" stroke-width="1.2" stroke-linejoin="round" paint-order="stroke" transform="translate(472.6,129.2) scale(1.5,1)">A</text>
<rect x="497.65" y="116.65" width="11.7" height="10.7" fill="#f0f0f0" stroke="#a0a0a0" stroke-width="1.3" />
<path d="M500.5 117.5 V115.5 H502.5 V114.5 H504.5 V115.5 H506.5 V117.5 Z" fill="#f0f0f0" stroke="#a0a0a0" stroke-width="1" />
<rect x="505.6" y="122.6" width="6.8" height="5.3" fill="#f0f0f0" stroke="#a0a0a0" stroke-width="1.2" />
<text x="0" y="0" font-size="11" fill="#fcfcfc" font-weight="bold" font-style="italic" stroke="#a0a0a0" stroke-width="1.3" stroke-linejoin="round" paint-order="stroke" transform="translate(495.3,129.3) scale(1.5,1)">A</text>
<rect x="520" y="114" width="7" height="8" fill="#0000ff" />
<rect x="521.5" y="116" width="3" height="1" fill="#fff" />
<rect x="521.5" y="118" width="4" height="1" fill="#fff" />
<circle cx="520.5" cy="123.5" r="1.8" fill="#000080" stroke="none" stroke-width="1"/>
<rect x="521" y="122" width="1.4" height="8" fill="#000080" />
<rect x="523.4" y="122" width="1.4" height="8" fill="#000080" />
<path d="M526.5 117.5 H532.5 L535.5 120.5 V126.5 H526.5 Z" fill="#fff" stroke="#000080" stroke-width="1" />
<path d="M532.5 117.5 V120.5 H535.5" fill="none" stroke="#000080" stroke-width="1" />
<rect x="528" y="120" width="3" height="1" fill="#000" />
<rect x="528" y="122" width="6" height="1" fill="#000" />
<rect x="528" y="124" width="6" height="1" fill="#000" />
<rect x="545.6" y="114.6" width="7.8" height="6.8" fill="#d0d0d0" stroke="#a8a8a8" stroke-width="1.2" />
<circle cx="543.5" cy="123.5" r="1.8" fill="#a0a0a0" stroke="none" stroke-width="1"/>
<rect x="544" y="122" width="1.4" height="8" fill="#a0a0a0" />
<rect x="546.4" y="122" width="1.4" height="8" fill="#a0a0a0" />
<rect x="549.65" y="119.65" width="8.7" height="7.7" fill="#f0f0f0" stroke="#a0a0a0" stroke-width="1.3" />
<rect x="551" y="122" width="3" height="1" fill="#a8a8a8" />
<rect x="551" y="124" width="6" height="1" fill="#a8a8a8" />
<rect x="564" y="113" width="1" height="18" fill="#9a9a9a" />
<text x="572.2" y="127.6" font-size="11.5" fill="#000" font-family="Liberation Serif,serif" stroke="#000" stroke-width=".25">a</text>
<text x="0" y="0" font-size="12" fill="#000080" font-weight="bold" font-family="Liberation Serif,serif" transform="translate(580,127.8) scale(1.12,1)">A</text>
<path d="M576.5 118.7 C576.8 114.3 581.5 113.8 583 117.2" fill="none" stroke="#0000ff" stroke-width="1.2" />
<path d="M581 117.6 L584.4 119.3 L584.7 115.4 Z" fill="#0000ff" stroke="none" stroke-width="1" />
<text x="0" y="0" font-size="12" fill="#000" font-weight="bold" font-family="Liberation Serif,serif" transform="translate(596,127.8) scale(1.12,1)">A</text>
<text x="606.8" y="127.6" font-size="11.5" fill="#000080" font-family="Liberation Serif,serif" stroke="#000080" stroke-width=".25">a</text>
<path d="M600.5 118.7 C600.8 114.3 605.5 113.8 607 117.2" fill="none" stroke="#0000ff" stroke-width="1.2" />
<path d="M605 117.6 L608.4 119.3 L608.7 115.4 Z" fill="#0000ff" stroke="none" stroke-width="1" />
<rect x="8.55" y="142.55" width="13.9" height="12.9" fill="#fff" stroke="#000" stroke-width="1.1" />
<rect x="8.5" y="142.5" width="14" height="2.3" fill="#10107a" />
<rect x="15" y="146.5" width="6" height="0.8" fill="#999" />
<rect x="17" y="148.5" width="4" height="0.8" fill="#bbb" />
<circle cx="12.8" cy="149.8" r="3.5" fill="#c8ffff" stroke="#000" stroke-width="1.1"/>
<line x1="10.2" y1="149.8" x2="15.4" y2="149.8" stroke="#00b0b0" stroke-width="0.9" />
<line x1="12.8" y1="147.2" x2="12.8" y2="152.4" stroke="#00b0b0" stroke-width="0.9" />
<line x1="15.4" y1="152.4" x2="19.6" y2="156.4" stroke="#400000" stroke-width="2.4" />
<line x1="15.8" y1="152.8" x2="19.2" y2="156" stroke="#f01010" stroke-width="1.3" />
<path d="M30.6 145.2 V155.6 H35.8 L37.5 157 L39.2 155.6 H44.4 V145.2 H43 V153.5 H38.6 L37.5 154.4 L36.4 153.5 H32 V145.2 Z" fill="#000080" stroke="#000080" stroke-width="0.8" />
<path d="M32 145 H36.2 L37.5 146.2 V154.2 L36.4 153.4 H32 Z" fill="#fff" stroke="#000080" stroke-width="0.8" />
<path d="M43 145 H38.8 L37.5 146.2 V154.2 L38.6 153.4 H43 Z" fill="#fff" stroke="#000080" stroke-width="0.8" />
<rect x="31" y="143" width="2" height="2" fill="#f00010" />
<rect x="34" y="143" width="2" height="2" fill="#00d020" />
<rect x="40" y="143" width="2.2" height="10" fill="#0000ff" />
<rect x="53" y="142.5" width="6.5" height="1.1" fill="#008080" />
<rect x="61" y="142.5" width="6" height="1.1" fill="#008080" />
<rect x="53" y="144.6" width="6.5" height="1.1" fill="#008080" />
<rect x="61" y="144.6" width="6" height="1.1" fill="#008080" />
<rect x="53" y="146.8" width="14" height="1.2" fill="#000" />
<rect x="53" y="149.1" width="14" height="1.2" fill="#000" />
<rect x="53" y="151.4" width="14" height="1.2" fill="#000" />
<rect x="53" y="154" width="4" height="1.1" fill="#0000ff" />
<rect x="58" y="154" width="4" height="1.1" fill="#0000ff" />
<rect x="63" y="154" width="4" height="1.1" fill="#0000ff" />
<rect x="53" y="156.1" width="4" height="1.1" fill="#0000ff" />
<rect x="58" y="156.1" width="4" height="1.1" fill="#0000ff" />
<rect x="63" y="156.1" width="4" height="1.1" fill="#0000ff" />
<text x="74.2" y="149.4" font-size="8.8" fill="#000" stroke="#000" stroke-width=".25">A</text>
<text x="0" y="0" font-size="11" fill="#000080" font-weight="bold" font-style="italic" font-family="Liberation Serif,serif" transform="translate(78.8,154.3) scale(1.6,1)">A</text>
<rect x="78.5" y="155.7" width="11.5" height="1.3" fill="#000080" />
<rect x="97" y="143" width="3" height="3" fill="#000080" />
<text x="96.6" y="151.6" font-size="6" fill="#0000ff" font-weight="bold">1</text>
<text x="96.3" y="157" font-size="6" fill="#008080" font-weight="bold">A</text>
<rect x="102" y="144" width="8" height="1.2" fill="#000" />
<rect x="102" y="149" width="8" height="1.2" fill="#000" />
<rect x="102" y="154" width="8" height="1.2" fill="#000" />
<path d="M131 146 C132 142 138 142 141 145 C145 149 146.5 153 144 155.5 C141 158 135 157.5 133.5 154.5 C132.5 152 130 150 131 146 Z" fill="#f0e840" stroke="#000" stroke-width="1.5" />
<circle cx="136.5" cy="145.5" r="1.6" fill="#f020f0" stroke="none" stroke-width="1"/>
<circle cx="133.8" cy="149.3" r="1.6" fill="#00a000" stroke="none" stroke-width="1"/>
<circle cx="135.5" cy="153.5" r="1.8" fill="#f00000" stroke="none" stroke-width="1"/>
<ellipse cx="140.5" cy="154.5" rx="2.2" ry="1.5" fill="#0000ff" stroke="none" stroke-width="1" />
<ellipse cx="141" cy="149.5" rx="1.3" ry="1.7" fill="#fff" stroke="#000" stroke-width="0.9" />
<rect x="160" y="143" width="7" height="11" fill="#00e020" />
<rect x="160.4" y="143.4" width="6.2" height="10.2" fill="none" stroke="#7a7a7a" stroke-width="0.8" />
<rect x="156" y="147" width="7" height="10" fill="#f8f000" />
<rect x="156.4" y="147.4" width="6.2" height="9.2" fill="none" stroke="#7a7a7a" stroke-width="0.8" />
<rect x="162" y="145" width="1.2" height="1.2" fill="#000080" />
<rect x="162" y="147" width="1.2" height="1.2" fill="#000080" />
<rect x="162" y="149" width="1.2" height="1.2" fill="#000080" />
<rect x="162" y="151" width="1.2" height="1.2" fill="#000080" />
<rect x="158.5" y="149" width="1.2" height="1.2" fill="#000080" />
<rect x="158.5" y="151" width="1.2" height="1.2" fill="#000080" />
<rect x="158.5" y="153" width="1.2" height="1.2" fill="#000080" />
<rect x="158.5" y="155" width="1.2" height="1.2" fill="#000080" />
<rect x="153.05" y="144.55" width="3.9" height="4.9" fill="#fff" stroke="#000" stroke-width="1.1" />
<rect x="153.45" y="150.45" width="6.1" height="7.1" fill="#fff" stroke="#555" stroke-width="0.9" />
<rect x="154.5" y="152" width="4" height="1" fill="#000080" />
<rect x="154.5" y="154" width="4" height="1" fill="#000080" />
<rect x="154.5" y="156" width="4" height="1" fill="#000080" />
<text x="0" y="0" font-size="11" fill="#000080" font-weight="bold" font-style="italic" font-family="Liberation Serif,serif" transform="translate(10.9,562.4) scale(1.65,1)">A</text>
<rect x="11" y="563.8" width="12" height="1.3" fill="#000080" />
<path d="M12.2 552.3 L14.4 554.5 L12.2 556.7 L10 554.5 Z" fill="#ffe800" stroke="#f00000" stroke-width="0.9" />
<text x="0" y="0" font-size="11" fill="#000080" font-weight="bold" font-style="italic" font-family="Liberation Serif,serif" transform="translate(36.4,562.4) scale(1.65,1)">A</text>
<rect x="35" y="563.8" width="12" height="1.3" fill="#000080" />
<line x1="35.3" y1="551.3" x2="39.5" y2="559.5" stroke="#000" stroke-width="2" />
<line x1="36.6" y1="553.4" x2="38" y2="556" stroke="#f8e800" stroke-width="1.3" />
<circle cx="35" cy="550.8" r="1.2" fill="#600000" stroke="none" stroke-width="1"/>
<text x="0" y="0" font-size="11" fill="#000080" font-weight="bold" font-style="italic" font-family="Liberation Serif,serif" transform="translate(58.6,562.4) scale(1.65,1)">A</text>
<rect x="58" y="563.8" width="11" height="1.3" fill="#000080" />
<path d="M56.3 552.5 L62.3 559 M62.3 552.5 L56.3 559" fill="none" stroke="#f00000" stroke-width="1.5" />
<text x="0" y="0" font-size="8" fill="#000080" font-weight="bold" font-style="italic" font-family="Liberation Serif,serif" transform="translate(83.6,556.9) scale(1.75,1)">A</text>
<rect x="84" y="557.9" width="9.5" height="1.1" fill="#000080" />
<ellipse cx="80" cy="561.3" rx="2.1" ry="2" fill="#000080" stroke="none" stroke-width="1" />
<rect x="80" y="559.3" width="3.8" height="1.2" fill="#000080" />
<rect x="79.9" y="559.3" width="1.2" height="6.7" fill="#000080" />
<rect x="82" y="559.3" width="1.2" height="6.7" fill="#000080" />
<path d="M80.5 557.6 V554.2 H83" fill="none" stroke="#f00000" stroke-width="1.2" />
<path d="M82.6 552.4 L84.9 554.2 L82.6 556 Z" fill="#f00000" stroke="none" stroke-width="1" />
<path d="M84.2 564.3 H88.5 V561" fill="none" stroke="#f00000" stroke-width="1.2" />
<path d="M86.7 561.6 L88.5 559.2 L90.3 561.6 Z" fill="#f00000" stroke="none" stroke-width="1" />
<text x="0" y="0" font-size="7.8" fill="#909090" font-weight="bold" font-style="italic" font-family="Liberation Serif,serif" transform="translate(101,558.3) scale(1.6,1)">A</text>
<rect x="101" y="559.2" width="8" height="1" fill="#909090" />
<text x="0" y="0" font-size="9" fill="#000080" font-weight="bold" font-style="italic" font-family="Liberation Serif,serif" transform="translate(104.5,564) scale(1.6,1)">A</text>
<rect x="105" y="565.9" width="9" height="1.2" fill="#000080" />
<rect x="103" y="563.2" width="4" height="1" fill="#0000ff" />
<path d="M116.8 551.3 L113.5 554.6" fill="none" stroke="#f00000" stroke-width="1.7" />
<path d="M111.6 552.6 V556.6 H115.6 Z" fill="#f00000" stroke="none" stroke-width="1" />
<text x="0" y="0" font-size="8" fill="#000080" font-weight="bold" font-style="italic" font-family="Liberation Serif,serif" transform="translate(123.8,556.9) scale(1.75,1)">A</text>
<rect x="124" y="557.9" width="9.5" height="1.1" fill="#000080" />
<path d="M133.2 554.4 H137.5 V556.6" fill="none" stroke="#0000ff" stroke-width="1.2" />
<path d="M135.7 556.3 L137.5 558.8 L139.3 556.3 Z" fill="#0000ff" stroke="none" stroke-width="1" />
<path d="M127 560 V564.5 H129.6" fill="none" stroke="#0000ff" stroke-width="1.2" />
<path d="M129.2 562.7 L131.6 564.5 L129.2 566.3 Z" fill="#0000ff" stroke="none" stroke-width="1" />
<ellipse cx="136" cy="562" rx="2.1" ry="2" fill="#000" stroke="none" stroke-width="1" />
<rect x="136" y="560" width="4" height="1.2" fill="#000" />
<rect x="135.9" y="560" width="1.2" height="7" fill="#000" />
<rect x="138" y="560" width="1.2" height="7" fill="#000" />
<rect x="148.5" y="552.3" width="13.5" height="1.9" fill="#000" />
<rect x="148.5" y="556" width="13.5" height="1.9" fill="#000" />
<rect x="148.5" y="559.6" width="13.5" height="1.9" fill="#000" />
<rect x="148.5" y="563.4" width="13.5" height="1.9" fill="#808080" /></svg>
<svg style="left:0;top:0" width="618" height="626"><ellipse cx="42.6" cy="569" rx="27.6" ry="34.6" fill="none" stroke="#f00c0c" stroke-width="3.6"/></svg>
<div class="a" style="left:38px;top:572px;width:71px;height:20px;background:#ffffe1;border:1px solid #707070;box-sizing:border-box;"></div>
<div class="t" style="left:42px;top:577.05px;font-size:11.5px;letter-spacing:0.33px;">Modify style</div>
<svg style="left:0;top:0" width="618" height="626"><path d="M40 557 V573 L43.6 569.8 L47.5 578.3 L51 576.8 L47.2 568.7 H52 Z" fill="#000"/></svg>
</body></html>
